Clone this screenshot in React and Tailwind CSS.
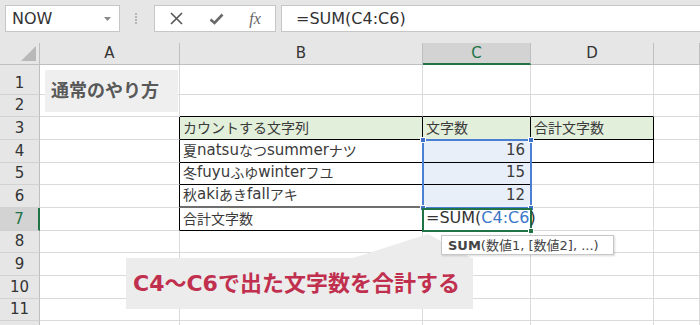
import React from 'react';

const CJK = /([\u3000-\u30ff\u4e00-\u9fff\uff00-\uffef]+)/;

const Mix = ({ text }) =>
  text.split(CJK).map((part, i) =>
    CJK.test(part) ? (
      <span key={i} className="text-[14px]">{part}</span>
    ) : (
      <span key={i}>{part}</span>
    )
  );

const G = 'border-[#dadada]';

const rowHeaders = ['1', '2', '3', '4', '5', '6', '7', '8', '9', '10', '11', ''];

// per row: classes for A, B, C, D, E cells
const rows = [
  ['', '', '', '', ''],
  ['', 'border-b-black', 'border-b-black', 'border-b-black', ''],
  ['border-r-black', 'border-r-black border-b-black bg-[#e2efda]', 'border-r-black border-b-black bg-[#e2efda]', 'border-r-black border-b-black bg-[#e2efda]', ''],
  ['border-r-black', 'border-r-black border-b-black', 'border-r-black border-b-black bg-[#e8eff9]', 'border-r-black border-b-black', ''],
  ['border-r-black', 'border-r-black border-b-black', 'border-r-black border-b-black bg-[#e8eff9]', '', ''],
  ['border-r-black', 'border-r-black border-b-2 border-b-[#6e6e6e]', 'border-r-black border-b-black bg-[#e8eff9]', '', ''],
  ['border-r-black', 'border-r-black border-b-black', 'border-r-black border-b-black', '', ''],
  ['', '', '', '', ''],
  ['', '', '', '', ''],
  ['', '', '', '', ''],
  ['', '', '', '', ''],
  ['', '', '', '', ''],
];

const Formula = () => (
  <span className="relative z-10 text-[16px] text-[#333]">
    =SUM(<span className="text-[#3c78c8]">C4:C6</span>)
  </span>
);

const contents = {
  '2-1': <Mix text="カウントする文字列" />,
  '2-2': <Mix text="文字数" />,
  '2-3': <Mix text="合計文字数" />,
  '3-1': <Mix text="夏natsuなつsummerナツ" />,
  '3-2': '16',
  '4-1': <Mix text="冬fuyuふゆwinterフユ" />,
  '4-2': '15',
  '5-1': <Mix text="秋akiあきfallアキ" />,
  '5-2': '12',
  '6-1': <Mix text="合計文字数" />,
  '6-2': <Formula />,
};

const Handle = ({ className }) => (
  <div className={`absolute w-[6px] h-[6px] bg-[#3f73c9] border border-white ${className}`} />
);

export default function App() {
  return (
    <div className="relative w-[700px] h-[325px] overflow-hidden bg-white font-['DejaVu_Sans','Noto_Sans_CJK_JP',sans-serif] text-[#3a3a3a]">
      {/* formula bar */}
      <div className="h-[43px] bg-[#e6e6e6] flex items-start pt-[5px] pl-[5px]">
        <div className="w-[115px] h-[27px] bg-white border border-[#c6c6c6] flex items-center pl-[6px] pr-[8px]">
          <span className="text-[16px] leading-none text-[#333] flex-1">NOW</span>
          <svg width="7" height="4" viewBox="0 0 7 4"><polygon points="0,0 7,0 3.5,4" fill="#8a8a8a" /></svg>
        </div>
        <div className="ml-[15px] mt-[8px] flex flex-col gap-[1px]">
          <div className="w-[2px] h-[2px] bg-[#b4b4b4]" />
          <div className="w-[2px] h-[2px] bg-[#b4b4b4]" />
          <div className="w-[2px] h-[2px] bg-[#b4b4b4]" />
          <div className="w-[2px] h-[2px] bg-[#b4b4b4]" />
        </div>
        <div className="ml-[17px] w-[122px] h-[27px] bg-white border border-[#c6c6c6] flex items-center">
          <div className="w-[42px] flex justify-center">
            <svg width="13" height="13" viewBox="0 0 13 13"><path d="M1 1L12 12M12 1L1 12" stroke="#555" strokeWidth="1.6" /></svg>
          </div>
          <div className="w-[38px] flex justify-center">
            <svg width="15" height="12" viewBox="0 0 15 12"><path d="M1.5 6.5L5.5 10L13.5 1.5" stroke="#6a6a6a" strokeWidth="2.6" fill="none" /></svg>
          </div>
          <div className="w-[40px] flex justify-center">
            <span className="font-['Liberation_Serif',serif] italic text-[16px] leading-none text-[#666]">fx</span>
          </div>
        </div>
        <div className="ml-[5px] flex-1 h-[27px] bg-white border border-[#c6c6c6] border-r-0 flex items-center pl-[14px]">
          <span className="text-[16px] leading-none text-[#333]">=SUM(C4:C6)</span>
        </div>
      </div>

      {/* sheet */}
      <div className="grid grid-cols-[40px_140px_243px_108px_123px_46px] grid-rows-[22px_30px_22px_23px_23px_22px_23px_23px_22px_23px_23px_22px_23px] leading-none">
        <div className="relative bg-[#e6e6e6] border-r border-b border-[#bfbfbf]">
          <svg className="absolute right-[3px] bottom-[3px]" width="15" height="15" viewBox="0 0 15 15"><polygon points="15,0 15,15 0,15" fill="#b8b8b8" /></svg>
        </div>
        {['A', 'B', 'C', 'D', ''].map((c) =>
          c === 'C' ? (
            <div key={c} className="bg-[#d3d3d3] border-r border-r-[#bfbfbf] border-b-2 border-b-[#217346] flex items-center justify-center text-[15px] text-[#217346]">C</div>
          ) : (
            <div key={c || 'E'} className="bg-[#e6e6e6] border-r border-b border-[#bfbfbf] flex items-center justify-center text-[15px] text-[#333]">{c}</div>
          )
        )}

        {rows.map((cells, r) => (
          <React.Fragment key={r}>
            {r === 6 ? (
              <div className="bg-[#d3d3d3] border-r-2 border-r-[#217346] border-b border-b-[#cfcfcf] flex items-end justify-center pb-[3px] text-[15px] text-[#217346]">7</div>
            ) : (
              <div className="bg-[#e6e6e6] border-r border-r-[#bfbfbf] border-b border-b-[#d2d2d2] flex items-end justify-center pb-[3px] text-[15px] text-[#333]">{rowHeaders[r]}</div>
            )}
            {cells.map((cls, c) => {
              const key = `${r}-${c}`;
              const num = c === 2 && r >= 3 && r <= 5;
              const spill = key === '6-2';
              return (
                <div
                  key={key}
                  className={`flex items-end pb-[4px] whitespace-nowrap border-r border-b ${G} ${cls} ${spill ? 'overflow-visible' : 'overflow-hidden'} ${num ? 'justify-end pr-[5px] text-[15px]' : 'pl-[3px] text-[15px]'}`}
                >
                  {contents[key]}
                </div>
              );
            })}
          </React.Fragment>
        ))}
      </div>

      {/* title shape */}
      <div className="absolute left-[45px] top-[70px] w-[133px] h-[42px] bg-[#efefef] flex items-center pl-[6px]">
        <span className="text-[18px] font-bold text-[#595959] leading-none">通常のやり方</span>
      </div>

      {/* range selection C4:C6 */}
      <div className="absolute left-[422px] top-[139px] w-[110px] h-[70px] border-2 border-[#4a7fd2]">
        <Handle className="-left-[4px] -top-[4px]" />
        <Handle className="-right-[4px] -top-[4px]" />
        <Handle className="-left-[4px] -bottom-[4px]" />
        <Handle className="-right-[4px] -bottom-[4px]" />
      </div>

      {/* active cell C7 */}
      <div className="absolute left-[422px] top-[208px] w-[110px] h-[24px] border-2 border-[#217346]">
        <div className="absolute -right-[4px] -bottom-[4px] w-[6px] h-[6px] bg-[#217346] border border-white" />
      </div>

      {/* callout */}
      <svg className="absolute left-0 top-0" width="700" height="325" viewBox="0 0 700 325">
        <polygon points="350,259 428,234 473,259" fill="#ececec" />
      </svg>
      <div className="absolute left-[126px] top-[258px] w-[347px] h-[51px] bg-[#ececec] flex items-center pl-[7px]">
        <span className="text-[22px] font-bold leading-none text-[#c0304e]">C4～C6で出た文字数を合計する</span>
      </div>

      {/* function tooltip */}
      <div className="absolute left-[441px] top-[235px] w-[173px] h-[20px] bg-white border border-[#c6c6c6] shadow-[1px_1px_2px_rgba(0,0,0,0.15)] flex items-center pl-[6px] text-[13px] leading-none text-[#444]">
        <span className="font-bold">SUM</span>(数値1, [数値2], ...)
      </div>
    </div>
  );
}
